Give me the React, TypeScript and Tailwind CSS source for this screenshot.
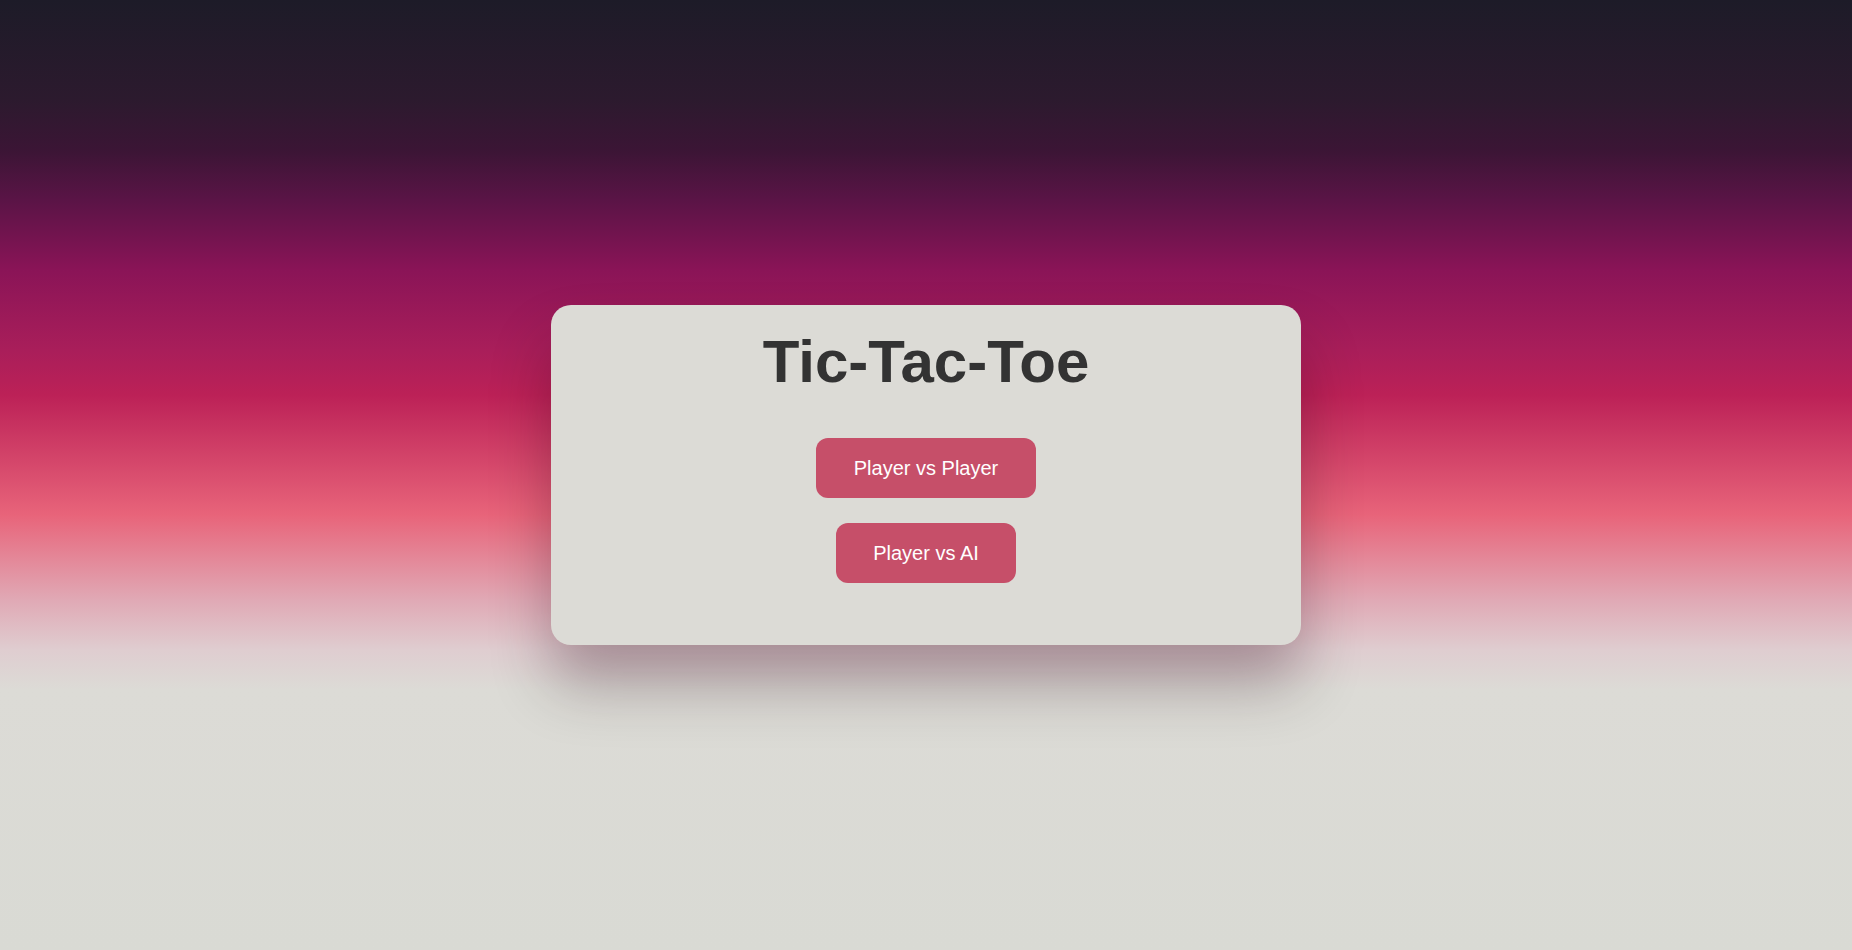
import React from 'react';

const modes = ['Player vs Player', 'Player vs AI'];

const App = () => {
  return (
    <div className="min-h-screen w-full flex items-center justify-center bg-[linear-gradient(to_bottom,#1d1b28_0px,#2c1a2e_100px,#3b1535_150px,#5a1446_200px,#8a1457_270px,#a91e5a_350px,#bc2157_395px,#e8647a_515px,#e0a9b5_600px,#dfcdd0_650px,#dcdbd6_690px,#d9dad4_950px)] font-['Liberation_Sans',Arial,sans-serif]">
      <div className="w-[750px] bg-[#dcdbd6] rounded-[20px] pt-[22px] pb-[62px] flex flex-col items-center shadow-[0_40px_60px_rgba(40,0,20,0.3)]">
        <h1 className="text-[60px] leading-[1.15] font-bold text-[#333333] mb-[42px]">Tic-Tac-Toe</h1>
        <div className="flex flex-col items-center gap-[25px]">
          {modes.map((m) => (
            <button
              key={m}
              className="bg-[#c64f69] text-white text-[20px] leading-[23px] px-[37.5px] py-[18.5px] rounded-[12px]"
            >
              {m}
            </button>
          ))}
        </div>
      </div>
    </div>
  );
};

export default App;
